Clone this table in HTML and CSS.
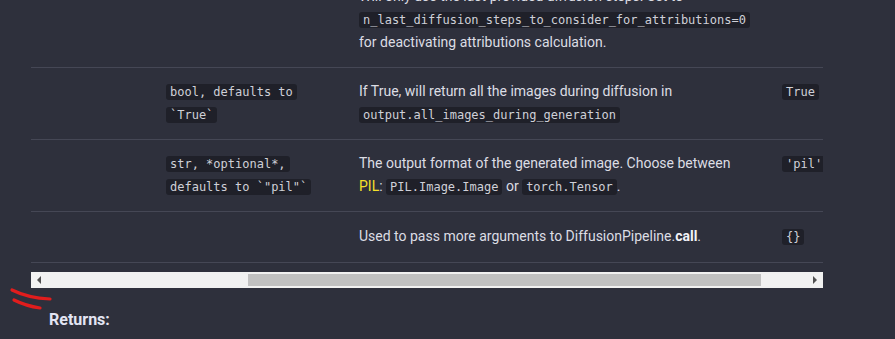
FILE: index.html
```html
<!DOCTYPE html>
<html>
<head>
<meta charset="utf-8">
<link rel="stylesheet" href="styles.css">
</head>
<body>
<div class="page">
  <div class="table-wrap">
    <div class="table">
      <div class="row">
        <div class="cell"></div>
        <div class="cell"></div>
        <div class="cell desc">Will only use the last provided diffusion steps. Set to <code>n_last_diffusion_steps_to_consider_for_attributions=0</code> for deactivating attributions calculation.</div>
        <div class="cell"></div>
      </div>
      <div class="row">
        <div class="cell"></div>
        <div class="cell type"><code>bool, defaults to `True`</code></div>
        <div class="cell desc">If True, will return all the images during diffusion in <code>output.all_images_during_generation</code></div>
        <div class="cell def"><code>True</code></div>
      </div>
      <div class="row">
        <div class="cell"></div>
        <div class="cell type"><code>str, *optional*, defaults to `"pil"`</code></div>
        <div class="cell desc">The output format of the generated image. Choose between <a class="link">PIL</a>: <code>PIL.Image.Image</code> or <code>torch.Tensor</code>.</div>
        <div class="cell def"><code>'pil'</code></div>
      </div>
      <div class="row last">
        <div class="cell"></div>
        <div class="cell"></div>
        <div class="cell desc">Used to pass more arguments to DiffusionPipeline.<strong>call</strong>.</div>
        <div class="cell def"><code>{}</code></div>
      </div>
    </div>
  </div>
  <div class="scrollbar">
    <div class="sb-btn"><span class="tri-left"></span></div>
    <div class="sb-track">
      <div class="sb-space-before"></div>
      <div class="sb-thumb"></div>
      <div class="sb-space-after"></div>
    </div>
    <div class="sb-btn"><span class="tri-right"></span></div>
  </div>
  <div class="returns-row">
    <svg class="mark" width="60" height="30" viewBox="0 0 60 30">
      <path d="M12 6 Q28 14 50 15" fill="none" stroke="#e11d1d" stroke-width="3.2" stroke-linecap="round"/>
      <path d="M14 16 Q26 22 40 24" fill="none" stroke="#e11d1d" stroke-width="3.2" stroke-linecap="round"/>
    </svg>
    <h4 class="returns">Returns:</h4>
  </div>
</div>
</body>
</html>
```
FILE: styles.css
```css
html, body {
  margin: 0;
  padding: 0;
  background: #2e303c;
  height: 100%;
  overflow: hidden;
}
body {
  font-family: Roboto, "Noto Sans", sans-serif;
  font-size: 14px;
  color: #dcdde4;
}
.page {
  padding-left: 31px;
  width: 792px;
}
.table-wrap {
  width: 792px;
  overflow: hidden;
  margin-top: -27px;
}
.table {
  width: 935px;
}
.row {
  display: grid;
  grid-template-columns: 119px 193px 423px 200px;
  border-bottom: 1px solid #454755;
}
.cell {
  padding: 12px 16px 13px 16px;
  line-height: 23px;
}
.row.last .cell {
  padding-top: 13px;
  padding-bottom: 14px;
}
code {
  font-family: "DejaVu Sans Mono", monospace;
  font-size: 12px;
  line-height: 0;
  background: #1f2029;
  color: #cfd0d8;
  padding: 1px 4px;
  border-radius: 3px;
  -webkit-box-decoration-break: clone;
  box-decoration-break: clone;
}
.link {
  color: #f5e02a;
}
strong {
  color: #f2f3f7;
  font-weight: 700;
}
.scrollbar {
  display: flex;
  height: 16px;
  margin-top: 9px;
  background: #f1f1f1;
}
.sb-btn {
  width: 16px;
  display: flex;
  align-items: center;
  justify-content: center;
}
.tri-left {
  width: 0;
  height: 0;
  border-top: 4px solid transparent;
  border-bottom: 4px solid transparent;
  border-right: 4px solid #505050;
}
.tri-right {
  width: 0;
  height: 0;
  border-top: 4px solid transparent;
  border-bottom: 4px solid transparent;
  border-left: 4px solid #505050;
}
.sb-track {
  flex: 1;
  display: flex;
  align-items: center;
}
.sb-space-before {
  width: 201px;
}
.sb-thumb {
  width: 513px;
  height: 12px;
  background: #c1c1c1;
}
.sb-space-after {
  flex: 1;
}
.returns-row {
  display: flex;
  margin-left: -31px;
  margin-top: -4px;
}
.mark {
  display: block;
  flex: none;
  width: 60px;
  height: 30px;
}
.returns {
  margin: 24px 0 0 -11px;
  font-size: 16px;
  font-weight: 700;
  line-height: 24px;
  color: #e3e5f3;
}
```
